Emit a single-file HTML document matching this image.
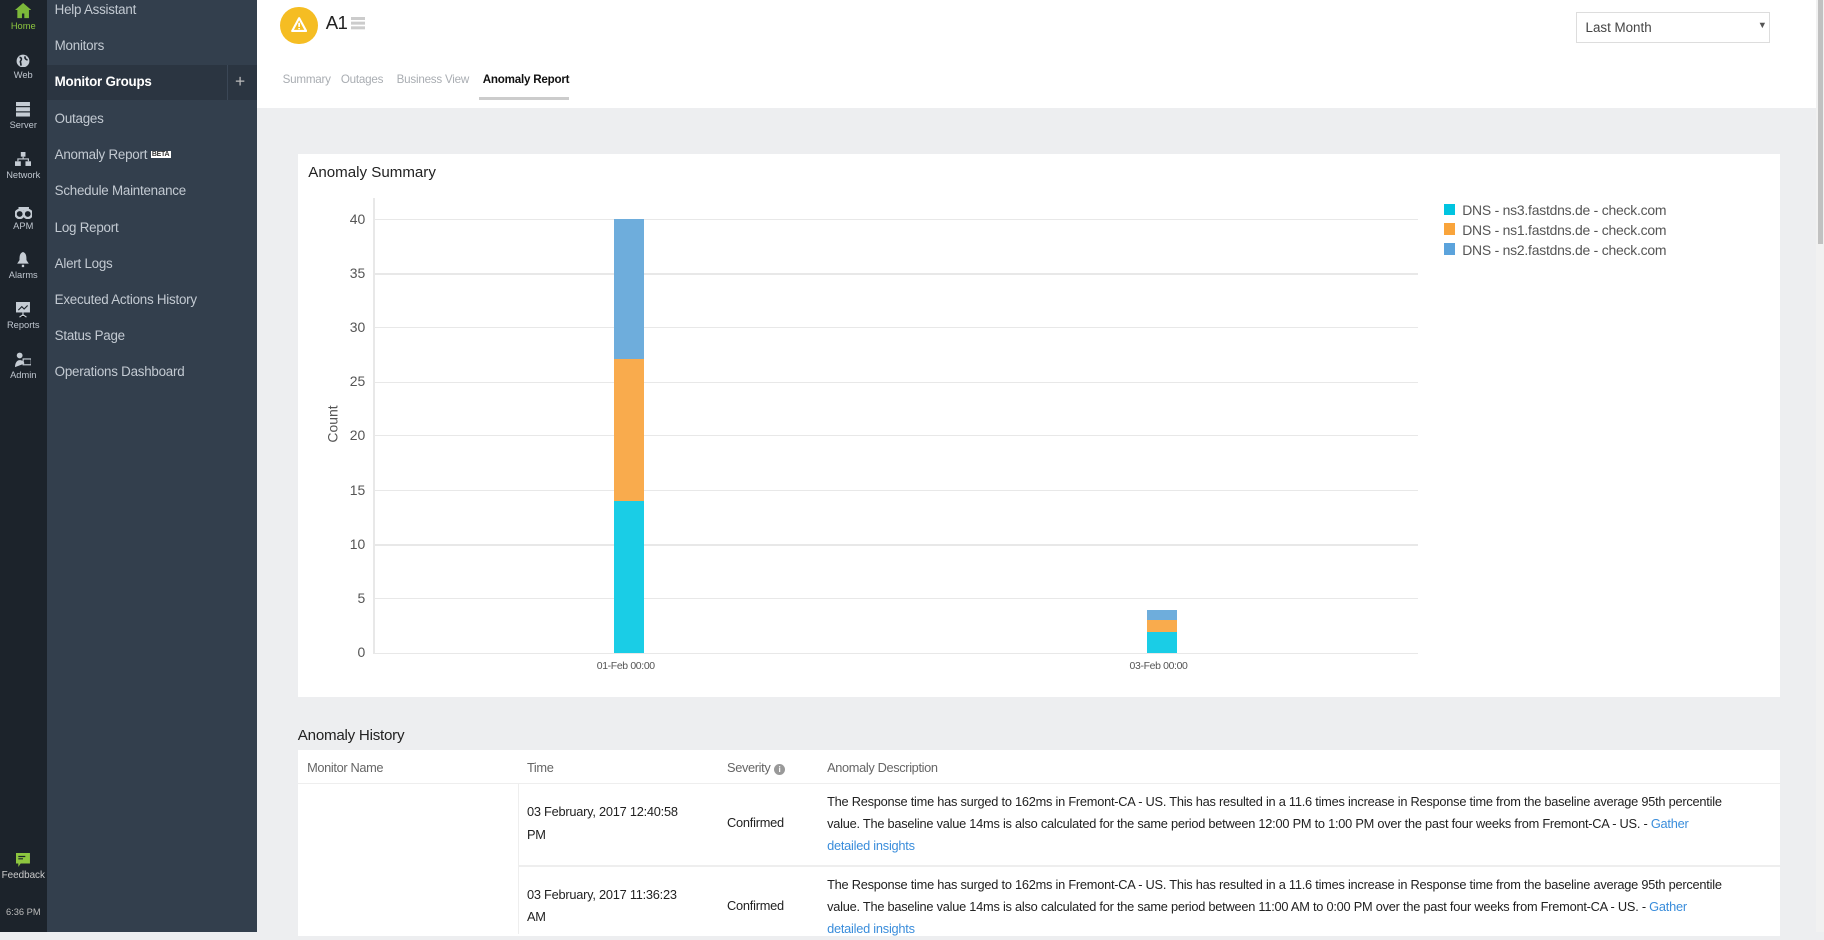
<!DOCTYPE html>
<html><head><meta charset="utf-8"><style>
html,body{margin:0;padding:0;}
body{width:1568px;height:801px;zoom:1.16327;overflow:hidden;position:relative;font-family:"Liberation Sans",sans-serif;background:#edeef0;}
.ab{position:absolute;}
#ib{left:0;top:0;width:40px;height:801px;background:#1c232b;}
.ic{position:absolute;left:0;width:40px;text-align:center;font-size:8px;color:#bfc6cf;}
.ic svg{display:block;margin:0 auto 2px;}
#menu{left:40px;top:0;width:181px;height:801px;background:#333f4d;}
.mi{position:absolute;left:7px;font-size:11.5px;color:#c3cad2;letter-spacing:-0.2px;}
#hdr{left:221px;top:0;width:1340px;height:93px;background:#fff;}
.tab{position:absolute;top:63px;font-size:10px;color:#a9adb2;letter-spacing:-0.2px;}
.card{background:#fff;}
.yl{position:absolute;width:30px;text-align:right;font-size:12px;color:#555;}
.gl{position:absolute;left:322px;width:897px;height:1px;background:#e8e8e8;}
.th{position:absolute;top:653px;font-size:11px;color:#666;letter-spacing:-0.3px;}
.td{position:absolute;font-size:11px;color:#222;line-height:19px;letter-spacing:-0.2px;}
a{color:#3a8ddb;text-decoration:none;}
</style></head><body>
<div id="ib" class="ab">
 <div class="ic" style="top:3px;color:#8dc63f"><svg width="14" height="13" viewBox="0 0 14 13"><path d="M7 0L0 6h2v7h4V9h2v4h4V6h2z" fill="#7cb83a"/></svg>Home</div>
 <div class="ic" style="top:46px"><svg width="12" height="12" viewBox="0 0 12 12"><circle cx="6" cy="6" r="5.5" fill="#c5ccd4"/><path d="M3 3c2 0 2 2 1 3s1 2 0 4M8 2c-1 2 1 3 2 3" stroke="#1c232b" stroke-width="1.4" fill="none"/></svg>Web</div>
 <div class="ic" style="top:88px"><svg width="12" height="13" viewBox="0 0 12 13"><rect x="0" y="0" width="12" height="3.5" fill="#c5ccd4"/><rect x="0" y="4.5" width="12" height="3.5" fill="#c5ccd4"/><rect x="0" y="9" width="12" height="3.5" fill="#c5ccd4"/></svg>Server</div>
 <div class="ic" style="top:131px"><svg width="14" height="13" viewBox="0 0 14 13"><rect x="5" y="0" width="4" height="4" fill="#c5ccd4"/><rect x="0" y="8" width="5" height="4" fill="#c5ccd4"/><rect x="9" y="8" width="5" height="4" fill="#c5ccd4"/><path d="M7 4v2M2.5 8V6h9v2" stroke="#c5ccd4" fill="none"/></svg>Network</div>
 <div class="ic" style="top:178px"><svg width="15" height="10" viewBox="0 0 15 10"><circle cx="4" cy="6" r="3.5" fill="none" stroke="#c5ccd4" stroke-width="2"/><circle cx="11" cy="6" r="3.5" fill="none" stroke="#c5ccd4" stroke-width="2"/><rect x="3" y="0" width="9" height="3" fill="#c5ccd4"/></svg>APM</div>
 <div class="ic" style="top:217px"><svg width="12" height="13" viewBox="0 0 12 13"><path d="M6 0C3 1 3 4 3 7L1 10h10L9 7c0-3 0-6-3-7zM5 11h2v2H5z" fill="#c5ccd4"/></svg>Alarms</div>
 <div class="ic" style="top:260px"><svg width="12" height="13" viewBox="0 0 12 13"><rect x="0" y="0" width="12" height="9" fill="#c5ccd4"/><path d="M2 7l3-3 2 2 3-3" stroke="#1c232b" fill="none"/><path d="M6 9v3M3 13l3-2 3 2" stroke="#c5ccd4"/></svg>Reports</div>
 <div class="ic" style="top:303px"><svg width="14" height="13" viewBox="0 0 14 13"><circle cx="4" cy="3" r="2.5" fill="#c5ccd4"/><path d="M0 13c0-4 2-6 4-6s4 1 4 3" fill="#c5ccd4"/><rect x="7" y="6" width="7" height="5" fill="none" stroke="#c5ccd4"/></svg>Admin</div>
 <div class="ic" style="top:733px;font-size:8.5px;color:#ccc"><svg width="12" height="13" viewBox="0 0 12 13"><path d="M0 0h12v9H4l-2 3V9H0z" fill="#8dc63f"/><path d="M2 3h6M2 5h4" stroke="#1c232b"/></svg>Feedback</div>
 <div class="ic" style="top:780px;font-size:8px;color:#bbb">6:36 PM</div>
</div>
<div id="menu" class="ab">
 <div class="mi" style="top:2px">Help Assistant</div>
 <div class="mi" style="top:33px">Monitors</div>
 <div class="ab" style="left:0;top:56px;width:181px;height:30px;background:#2b3541"></div>
 <div class="ab" style="left:155px;top:56px;width:1px;height:30px;background:#3b4756"></div>
 <div class="mi" style="top:64px;color:#fff;font-weight:bold">Monitor Groups</div>
 <div class="ab" style="left:162px;top:61px;font-size:15px;color:#bbb">+</div>
 <div class="mi" style="top:95px">Outages</div>
 <div class="mi" style="top:126px">Anomaly Report <span style="background:#fff;color:#333;font-size:6px;font-weight:bold;padding:0 1px;vertical-align:2px">BETA</span></div>
 <div class="mi" style="top:157px">Schedule Maintenance</div>
 <div class="mi" style="top:189px">Log Report</div>
 <div class="mi" style="top:220px">Alert Logs</div>
 <div class="mi" style="top:251px">Executed Actions History</div>
 <div class="mi" style="top:282px">Status Page</div>
 <div class="mi" style="top:313px">Operations Dashboard</div>
</div>
<div id="hdr" class="ab">
 <div class="ab" style="left:20px;top:6px;width:32px;height:32px;border-radius:50%;background:#f5bd23"></div>
 <svg class="ab" style="left:29px;top:15px" width="14" height="13" viewBox="0 0 14 13"><path d="M7 1L1 12h12z" fill="none" stroke="#fff" stroke-width="1.8" stroke-linejoin="round"/><path d="M7 5v3.5M7 9.5v1" stroke="#fff" stroke-width="1.5"/></svg>
 <div class="ab" style="left:59px;top:10px;font-size:16px;color:#222;letter-spacing:-0.5px">A1</div>
 <div class="ab" style="left:81px;top:15px;width:12px;height:2px;background:#ccc;box-shadow:0 4px 0 #ccc,0 8px 0 #ccc"></div>
 <div class="tab" style="left:22px">Summary</div>
 <div class="tab" style="left:72px">Outages</div>
 <div class="tab" style="left:120px">Business View</div>
 <div class="tab" style="left:194px;color:#111;font-weight:bold">Anomaly Report</div>
 <div class="ab" style="left:191px;top:83px;width:77px;height:3px;background:#ccc"></div>
 <div class="ab" style="left:1134px;top:10px;width:165px;height:25px;border:1px solid #ddd;"></div>
 <div class="ab" style="left:1142px;top:17px;font-size:11.5px;color:#444">Last Month</div>
 <div class="ab" style="left:1290px;top:17px;font-size:8px;color:#555">▼</div>
</div>
<div class="ab" style="left:1561px;top:0;width:7px;height:801px;background:#f1f1f1"></div>
<div class="ab" style="left:1563px;top:0;width:4px;height:210px;background:#c1c1c1"></div>
<div class="ab card" style="left:256px;top:132px;width:1274px;height:467px"></div>
<div class="ab" style="left:265px;top:141px;font-size:13px;color:#222">Anomaly Summary</div>
<div class="ab" style="left:321px;top:170px;width:1px;height:392px;background:#e8e8e8"></div>
<div class="gl" style="top:188px"></div><div class="gl" style="top:235px"></div><div class="gl" style="top:281px"></div><div class="gl" style="top:328px"></div><div class="gl" style="top:374px"></div><div class="gl" style="top:421px"></div><div class="gl" style="top:468px"></div><div class="gl" style="top:514px"></div><div class="gl" style="top:561px"></div>
<div class="yl" style="left:284px;top:181px">40</div><div class="yl" style="left:284px;top:228px">35</div><div class="yl" style="left:284px;top:274px">30</div><div class="yl" style="left:284px;top:321px">25</div><div class="yl" style="left:284px;top:367px">20</div><div class="yl" style="left:284px;top:414px">15</div><div class="yl" style="left:284px;top:461px">10</div><div class="yl" style="left:284px;top:507px">5</div><div class="yl" style="left:284px;top:554px">0</div>
<div class="ab" style="left:270px;top:358px;font-size:12px;color:#555;transform:rotate(-90deg);transform-origin:center">Count</div>
<div class="ab" style="left:528px;top:188px;width:26px;height:121px;background:#6eaddc"></div>
<div class="ab" style="left:528px;top:309px;width:26px;height:122px;background:#f9ab4d"></div>
<div class="ab" style="left:528px;top:431px;width:26px;height:130px;background:#1acde6"></div>
<div class="ab" style="left:986px;top:524px;width:26px;height:9px;background:#6eaddc"></div>
<div class="ab" style="left:986px;top:533px;width:26px;height:10px;background:#f9ab4d"></div>
<div class="ab" style="left:986px;top:543px;width:26px;height:18px;background:#1acde6"></div>
<div class="ab" style="left:513px;top:568px;font-size:9px;color:#555;letter-spacing:-0.3px">01-Feb 00:00</div>
<div class="ab" style="left:971px;top:568px;font-size:9px;color:#555;letter-spacing:-0.3px">03-Feb 00:00</div>
<div class="ab" style="left:1241px;top:175px;width:10px;height:10px;background:#00c4e0"></div>
<div class="ab" style="left:1241px;top:192px;width:10px;height:10px;background:#f9a43b"></div>
<div class="ab" style="left:1241px;top:209px;width:10px;height:10px;background:#5ba3dc"></div>
<div class="ab" style="left:1257px;top:173px;font-size:12px;color:#555;line-height:17px;letter-spacing:-0.2px">DNS - ns3.fastdns.de - check.com<br>DNS - ns1.fastdns.de - check.com<br>DNS - ns2.fastdns.de - check.com</div>
<div class="ab" style="left:256px;top:625px;font-size:13px;color:#222;letter-spacing:-0.2px">Anomaly History</div>
<div class="ab card" style="left:256px;top:645px;width:1274px;height:160px"></div>
<div class="ab" style="left:256px;top:673px;width:1274px;height:1px;background:#eee"></div>
<div class="ab" style="left:445px;top:744px;width:1085px;height:1px;background:#eee"></div>
<div class="ab" style="left:445px;top:673px;width:1px;height:130px;background:#eee"></div>
<div class="th" style="left:264px">Monitor Name</div><div class="th" style="left:453px">Time</div>
<div class="th" style="left:625px">Severity <span style="display:inline-block;width:10px;height:10px;border-radius:50%;background:#999;color:#fff;font-size:7px;text-align:center;line-height:10px;font-weight:bold">i</span></div>
<div class="th" style="left:711px">Anomaly Description</div>
<div class="td" style="left:453px;top:689px;width:140px">03 February, 2017 12:40:58 PM</div>
<div class="td" style="left:625px;top:698px">Confirmed</div>
<div class="td" style="left:711px;top:680px;width:775px">The Response time has surged to 162ms in Fremont-CA - US. This has resulted in a 11.6 times increase in Response time from the baseline average 95th percentile value. The baseline value 14ms is also calculated for the same period between 12:00 PM to 1:00 PM over the past four weeks from Fremont-CA - US. - <a>Gather detailed insights</a></div>
<div class="td" style="left:453px;top:760px;width:140px">03 February, 2017 11:36:23 AM</div>
<div class="td" style="left:625px;top:769px">Confirmed</div>
<div class="td" style="left:711px;top:751px;width:775px">The Response time has surged to 162ms in Fremont-CA - US. This has resulted in a 11.6 times increase in Response time from the baseline average 95th percentile value. The baseline value 14ms is also calculated for the same period between 11:00 AM to 0:00 PM over the past four weeks from Fremont-CA - US. - <a>Gather detailed insights</a></div>
</body></html>
